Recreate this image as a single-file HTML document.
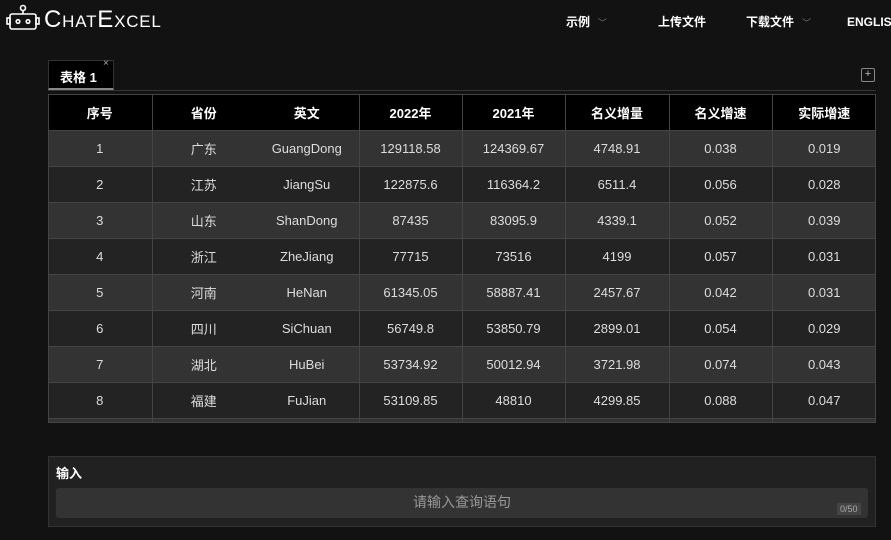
<!DOCTYPE html><html><head><meta charset="utf-8"><style>
*{margin:0;padding:0;box-sizing:border-box}
body{width:891px;height:540px;background:#121212;font-family:"Liberation Sans","Noto Sans CJK SC",sans-serif;color:#fff;position:relative;overflow:hidden}
.a{position:absolute}
.nav{font-size:12px;font-weight:bold;top:13px}
.chev{color:#777;font-weight:normal;font-size:9px;margin-left:8px}
table{border-collapse:collapse;position:absolute;left:48px;top:94px;width:828px;font-size:13px;table-layout:fixed}
td,th{height:36px;text-align:center;border-bottom:1px solid #444;border-left:1px solid #444}
th{background:#000;height:35px;font-weight:bold;font-size:13px}
tr.o td{background:#333;color:#ddd}
tr.e td{background:#232323;color:#ddd}
td.n,th.n{border-left:none}
</style></head><body>
<svg class="a" style="left:6px;top:3px" width="34" height="28" viewBox="0 0 34 28" fill="none" stroke="#fff" stroke-width="1.6">
<circle cx="17" cy="5" r="2.5"/><line x1="17" y1="7.5" x2="17" y2="11"/>
<rect x="4" y="11" width="26" height="15" rx="2"/><rect x="1" y="15" width="3" height="6"/><rect x="30" y="15" width="3" height="6"/>
<circle cx="12" cy="18.5" r="1.8"/><circle cx="22" cy="18.5" r="1.8"/></svg>
<div class="a" style="left:44px;top:6px;font-size:24px;letter-spacing:0.8px;font-variant:small-caps;font-family:'Liberation Sans',sans-serif">ChatExcel</div>
<div class="a nav" style="left:566px">示例<span class="chev">﹀</span></div>
<div class="a nav" style="left:658px">上传文件</div>
<div class="a nav" style="left:746px">下载文件<span class="chev">﹀</span></div>
<div class="a nav" style="left:847px;top:15px">ENGLISH</div>
<div class="a" style="left:48px;top:60px;width:66px;height:30px;background:#000;border:1px solid #333;border-bottom:2px solid #888;font-size:13px;font-weight:bold;padding:6px 0 0 11px">表格 1</div>
<div class="a" style="left:103px;top:58px;font-size:10px;color:#aaa">×</div>
<div class="a" style="left:48px;top:90px;width:828px;height:1px;background:#333"></div>
<div class="a" style="left:861px;top:68px;width:14px;height:14px;border:1px solid #888;border-radius:2px;font-size:11px;line-height:11px;text-align:center;color:#bbb">+</div>
<div class="a" style="left:48px;top:94px;width:828px;height:329px;overflow:hidden;border:1px solid #444;background:#333">
<table style="left:-1px;top:0;width:828px">
<colgroup><col style="width:104px"><col style="width:103px"><col style="width:104px"><col style="width:103px"><col style="width:103px"><col style="width:104px"><col style="width:103px"><col style="width:104px"></colgroup>
<tr><th class="n">序号</th><th>省份</th><th class="n">英文</th><th>2022年</th><th>2021年</th><th>名义增量</th><th>名义增速</th><th>实际增速</th></tr>
<tr class="o"><td class="n">1</td><td>广东</td><td class="n">GuangDong</td><td>129118.58</td><td>124369.67</td><td>4748.91</td><td>0.038</td><td>0.019</td></tr>
<tr class="e"><td class="n">2</td><td>江苏</td><td class="n">JiangSu</td><td>122875.6</td><td>116364.2</td><td>6511.4</td><td>0.056</td><td>0.028</td></tr>
<tr class="o"><td class="n">3</td><td>山东</td><td class="n">ShanDong</td><td>87435</td><td>83095.9</td><td>4339.1</td><td>0.052</td><td>0.039</td></tr>
<tr class="e"><td class="n">4</td><td>浙江</td><td class="n">ZheJiang</td><td>77715</td><td>73516</td><td>4199</td><td>0.057</td><td>0.031</td></tr>
<tr class="o"><td class="n">5</td><td>河南</td><td class="n">HeNan</td><td>61345.05</td><td>58887.41</td><td>2457.67</td><td>0.042</td><td>0.031</td></tr>
<tr class="e"><td class="n">6</td><td>四川</td><td class="n">SiChuan</td><td>56749.8</td><td>53850.79</td><td>2899.01</td><td>0.054</td><td>0.029</td></tr>
<tr class="o"><td class="n">7</td><td>湖北</td><td class="n">HuBei</td><td>53734.92</td><td>50012.94</td><td>3721.98</td><td>0.074</td><td>0.043</td></tr>
<tr class="e"><td class="n">8</td><td>福建</td><td class="n">FuJian</td><td>53109.85</td><td>48810</td><td>4299.85</td><td>0.088</td><td>0.047</td></tr>
<tr class="o"><td class="n">9</td><td>湖南</td><td class="n">HuNan</td><td></td><td></td><td></td><td></td><td></td></tr>
</table></div>
<div class="a" style="left:48px;top:456px;width:828px;height:71px;background:#212121;border:1px solid #333"></div>
<div class="a" style="left:56px;top:463px;font-size:13px;font-weight:bold">输入</div>
<div class="a" style="left:56px;top:488px;width:812px;height:30px;background:#333;border-radius:3px;text-align:center;font-size:14px;color:#999;line-height:29px">请输入查询语句</div>
<div class="a" style="left:837px;top:503px;background:#444;color:#aaa;font-size:9px;padding:1px 3px">0/50</div>
</body></html>
